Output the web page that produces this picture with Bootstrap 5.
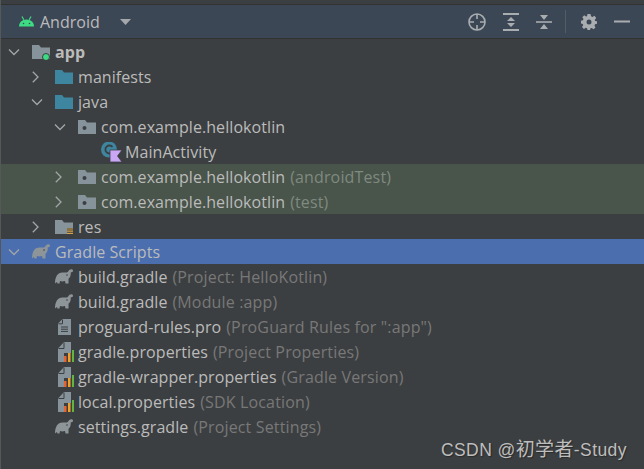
<!DOCTYPE html>
<html lang="en"><head><meta charset="utf-8"><title>Project</title>
<link href="https://cdn.jsdelivr.net/npm/bootstrap@5.3.0/dist/css/bootstrap.min.css" rel="stylesheet">
<style>
html,body{height:100%;margin:0;overflow:hidden}
body{background:#3c3f41;color:#bbbbbb;font-family:"Open Sans","Noto Sans",sans-serif;font-size:16px;letter-spacing:.07px;border-left:1px solid #555759}
.top-strip{height:4px;background:#3c3f41}
.tool-head{height:35px;background:#3c4756;border-top:1px solid #323232;border-bottom:1px solid #323232;padding-left:18px;padding-right:13px}
.tool-title{color:#bbbbbb;font-size:16px;margin-left:6px;letter-spacing:0}
.tool-caret{margin-left:20px}
.tool-acts{gap:17px;margin-right:1px}
.tool-sep{width:1px;height:23px;background:#555c66;margin-left:-4px;margin-right:-2px}
.tree-row{height:25px;white-space:nowrap}
.tree-row span{line-height:25px;padding-top:1px}
.tree-row svg{flex:none}
.lv0{padding-left:6px}.lv1{padding-left:29px}.lv2{padding-left:52px}.lv3{padding-left:100px}
.leaf{padding-left:54px}
.chev{width:14px;height:14px;margin-right:11px}
.ico{width:18px;height:16px;margin-right:5px}
.ico-main{width:21px;height:20px;margin-right:3px}
.ico-g{width:18px;height:15px;margin-right:5px}
.ico-f{width:13px;height:16px;margin-left:3px;margin-right:7px}
.ico-p{width:16px;height:20px;margin-left:3px;margin-right:4px}
.row-test{background:#49544a}
.row-sel{background:#4b6eaf}
.hint{color:#787878;margin-left:5px;letter-spacing:.15px}
.row-test .hint{color:#7f8a80}
.bold-name{font-weight:700}
.wm{position:absolute;left:441px;top:434px;color:#bdbdbd;font:17.5px "Liberation Sans","Noto Sans CJK SC",sans-serif;letter-spacing:.4px;text-shadow:1px 1px 1px #2a2a2a}
.wm-cjk{font-size:19px}
</style></head><body>
<svg width="0" height="0" class="position-absolute">
<defs>
<symbol id="down" viewBox="0 0 14 14"><path d="M2 4.500 7 9.500 12 4.500" fill="none" stroke="#a3a6a8" stroke-width="1.300"/></symbol>
<symbol id="right" viewBox="0 0 14 14"><path d="M2.800 1.800 8 7 2.800 12.200" fill="none" stroke="#a3a6a8" stroke-width="1.300"/></symbol>
<symbol id="folder" viewBox="0 0 18 16"><path d="M0 1H7L9 3.500H18V15H0Z" fill="#3e86a0"/></symbol>
<symbol id="pkg" viewBox="0 0 18 16"><path d="M0 1H7L9 3.500H18V15H0Z" fill="#87939a"/><circle cx="6.500" cy="9" r="2" fill="#3c3f41"/></symbol>
<symbol id="elephant" viewBox="0 0 18 15"><path d="M0 14.500C0 8 2.500 3.500 7.500 3.500C10.500 3.500 12 4 13.200 2.500C14.200 .5 16.500 -.3 17.600 .8C18.500 1.800 17.800 3.300 16.800 3.300C16.200 3.300 16 3 15.700 3.500C16 6 15.300 8.500 13.500 9.800V14.500H10.500L10 12C8 12.500 6.500 12.500 5 12L4.500 14.500H2.500L2 13C1.200 13.500 .5 14 0 14.500Z" fill="#8d9599"/><circle cx="12" cy="6" r=".8" fill="#3c3f41"/></symbol>
<symbol id="props" viewBox="0 0 16 20"><path d="M0 6.500 6 0H13V11H6V20H0Z" fill="#87939a"/><path d="M6 .5V6.500H.5" fill="none" stroke="#3c3f41"/><rect x="6" y="14" width="2.500" height="6" fill="#e8642c"/><rect x="10" y="11" width="2.500" height="9" fill="#eda32b"/><rect x="14" y="8" width="2" height="12" fill="#62b543"/></symbol>
<symbol id="file" viewBox="0 0 13 16"><path d="M0 4.500 4.500 0H13V16H0Z" fill="#87939a"/><path d="M4.500 .5V4.800H.5M3 8H10M3 10.200H10M3 12.400H10" fill="none" stroke="#3c3f41" stroke-width="1"/></symbol>
</defs></svg>
<div class="top-strip"></div>
<div class="tool-head d-flex align-items-center">
<svg width="15" height="11" viewBox="0 0 15 11"><path d="M0 10.500C0 6.500 3 3.500 7.500 3.500C12 3.500 15 6.500 15 10.500Z" fill="#3ddc84"/><path d="M3 .5 4.800 3.800M12 .5 10.200 3.800" stroke="#3ddc84" stroke-width="1.200"/><circle cx="4.500" cy="7.500" r=".8" fill="#3c4756"/><circle cx="10.500" cy="7.500" r=".8" fill="#3c4756"/></svg>
<span class="tool-title">Android</span>
<svg class="tool-caret" width="11" height="6" viewBox="0 0 11 6"><path d="M0 0H11L5.500 6Z" fill="#a5a8ab"/></svg>
<div class="tool-acts ms-auto d-flex align-items-center">
<svg width="18" height="18" viewBox="0 0 18 18" fill="none" stroke="#a9adb0" stroke-width="1.600"><circle cx="9" cy="9" r="8"/><path d="M9 1V6M9 12V17M1 9H6M12 9H17"/></svg>
<svg width="16" height="18" viewBox="0 0 16 18"><path d="M0 1H16M0 17H16" stroke="#a9adb0" stroke-width="2"/><path d="M8 4 12 8H4ZM8 14 4 10H12Z" fill="#a9adb0"/></svg>
<svg width="16" height="14" viewBox="0 0 16 14"><path d="M0 7H16" stroke="#a9adb0" stroke-width="1.600"/><path d="M4 0H12L8 5ZM8 9 12 14H4Z" fill="#a9adb0"/></svg>
<div class="tool-sep"></div>
<svg width="16" height="16" viewBox="0 0 16 16"><path d="M6.500 0H9.500L10 2.300 11.500 3 13.500 1.800 15.200 4 13.800 5.800 14.200 6.900 16 7.300V9.800L14 10.300 13.500 11.700 14.500 13.500 12.500 15.200 10.800 14 9.500 14.300 9 16H6.500L6 14.200 4.800 13.800 2.900 15 1 13 2.200 11.200 1.800 10 0 9.500V6.800L2 6.300 2.500 5 1.300 3.200 3.200 1.300 5 2.500 6 2.200Z" fill="#a9adb0"/><circle cx="8" cy="8" r="2.500" fill="#3c4756"/></svg>
<svg width="16" height="3" viewBox="0 0 16 3"><path d="M0 1.500H16" stroke="#a9adb0" stroke-width="2"/></svg>
</div>
</div>
<div>
<div class="tree-row d-flex align-items-center lv0"><svg class="chev"><use href="#down"/></svg><svg class="ico" viewBox="0 0 18 16"><path d="M0 1H7L9 3.500H18V15H0Z" fill="#87939a"/><circle cx="14" cy="13" r="3.500" fill="#3ddc84" stroke="#3c3f41"/></svg><span class="bold-name">app</span></div>
<div class="tree-row d-flex align-items-center lv1"><svg class="chev"><use href="#right"/></svg><svg class="ico"><use href="#folder"/></svg><span>manifests</span></div>
<div class="tree-row d-flex align-items-center lv1"><svg class="chev"><use href="#down"/></svg><svg class="ico"><use href="#folder"/></svg><span>java</span></div>
<div class="tree-row d-flex align-items-center lv2"><svg class="chev"><use href="#down"/></svg><svg class="ico"><use href="#pkg"/></svg><span>com.example.hellokotlin</span></div>
<div class="tree-row d-flex align-items-center lv3"><svg class="ico-main" viewBox="0 0 21 20"><circle cx="8" cy="7.500" r="8" fill="#3e86a0"/><path d="M11.500 5A4 4 0 1 0 11.500 10" fill="none" stroke="#3c3f41" stroke-width="1.800"/><path d="M9 8H21L16.500 14 21 20H9Z" fill="#c9a7f5" stroke="#3c3f41" stroke-width=".8"/></svg><span>MainActivity</span></div>
<div class="tree-row row-test d-flex align-items-center lv2"><svg class="chev"><use href="#right"/></svg><svg class="ico"><use href="#pkg"/></svg><span>com.example.hellokotlin</span><span class="hint">(androidTest)</span></div>
<div class="tree-row row-test d-flex align-items-center lv2"><svg class="chev"><use href="#right"/></svg><svg class="ico"><use href="#pkg"/></svg><span>com.example.hellokotlin</span><span class="hint">(test)</span></div>
<div class="tree-row d-flex align-items-center lv1"><svg class="chev"><use href="#right"/></svg><svg class="ico" viewBox="0 0 18 16"><path d="M0 1H7L9 3.500H18V9H12V15H0Z" fill="#87939a"/><path d="M12 10H18M12 12.200H18M12 14.400H18" stroke="#d9a343" stroke-width="1.200"/></svg><span>res</span></div>
<div class="tree-row row-sel d-flex align-items-center lv0"><svg class="chev"><use href="#down"/></svg><svg class="ico-g"><use href="#elephant"/></svg><span>Gradle Scripts</span></div>
<div class="tree-row d-flex align-items-center leaf"><svg class="ico-g"><use href="#elephant"/></svg><span>build.gradle</span><span class="hint">(Project: HelloKotlin)</span></div>
<div class="tree-row d-flex align-items-center leaf"><svg class="ico-g"><use href="#elephant"/></svg><span>build.gradle</span><span class="hint">(Module :app)</span></div>
<div class="tree-row d-flex align-items-center leaf"><svg class="ico-f"><use href="#file"/></svg><span>proguard-rules.pro</span><span class="hint">(ProGuard Rules for ":app")</span></div>
<div class="tree-row d-flex align-items-center leaf"><svg class="ico-p"><use href="#props"/></svg><span>gradle.properties</span><span class="hint">(Project Properties)</span></div>
<div class="tree-row d-flex align-items-center leaf"><svg class="ico-p"><use href="#props"/></svg><span>gradle-wrapper.properties</span><span class="hint">(Gradle Version)</span></div>
<div class="tree-row d-flex align-items-center leaf"><svg class="ico-p"><use href="#props"/></svg><span>local.properties</span><span class="hint">(SDK Location)</span></div>
<div class="tree-row d-flex align-items-center leaf"><svg class="ico-g"><use href="#elephant"/></svg><span>settings.gradle</span><span class="hint">(Project Settings)</span></div>
</div>
<div class="wm">CSDN @<span class="wm-cjk">初学者</span>-Study</div>
</body></html>
